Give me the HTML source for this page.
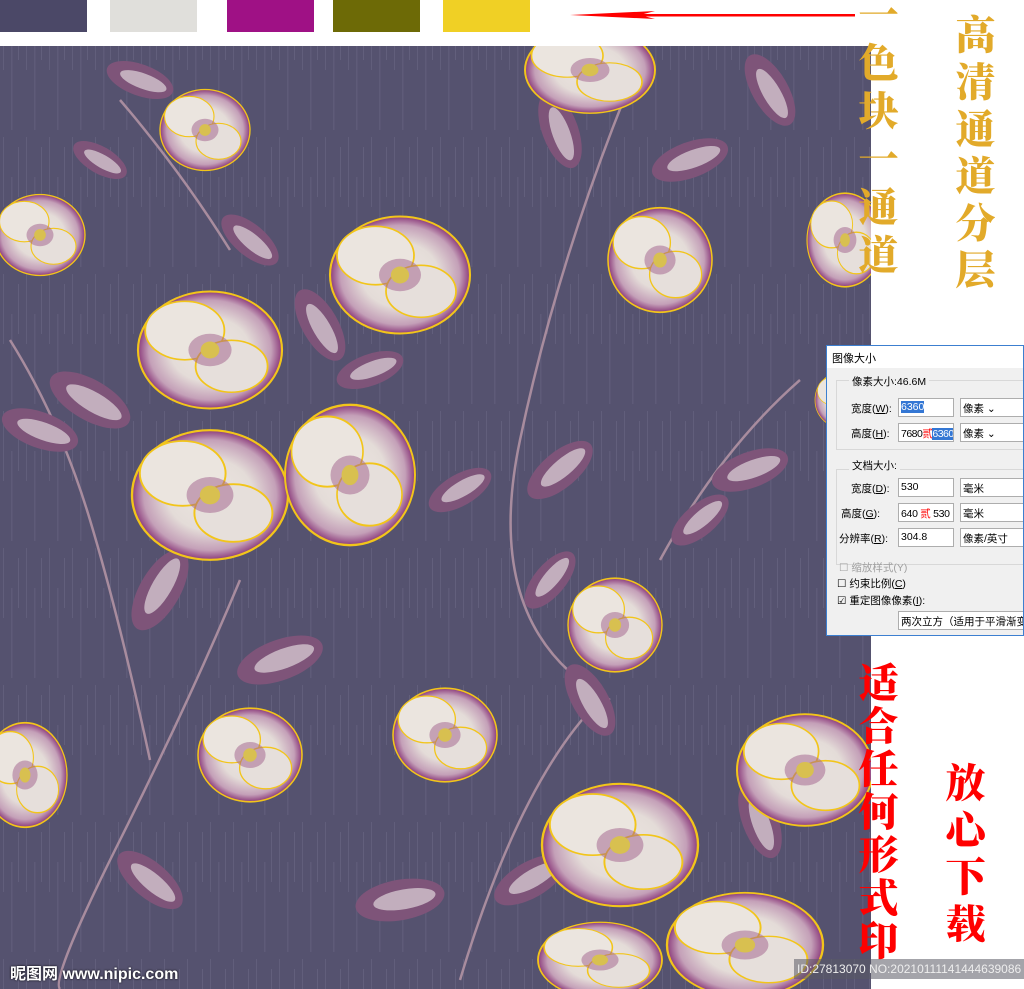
<!DOCTYPE html>
<html><head><meta charset="utf-8"><style>
*{margin:0;padding:0;box-sizing:border-box}
body{width:1024px;height:989px;overflow:hidden;background:#fff;position:relative;font-family:"Liberation Sans","Noto Sans CJK SC",sans-serif}
.sw{position:absolute;top:0;height:32px}
.pat{position:absolute;left:0;top:46px;width:871px;height:943px;background:#54516e;overflow:hidden}
.vt{position:absolute;font-family:"Noto Serif CJK SC","WenQuanYi Zen Hei",serif;font-weight:900;writing-mode:vertical-rl;text-orientation:upright}
.dlg{position:absolute;left:826px;top:345px;width:198px;height:291px;background:#f0f0f0;border:1px solid #3c7fd0;font-size:10.5px;color:#000;white-space:nowrap;overflow:hidden}
.dlg .t{height:22px;background:#fff;padding:4px 5px;font-size:11px}
.fs{position:absolute;border:1px solid #d8d8d8}
.lb{position:absolute;background:#f0f0f0;padding:0 3px}
.in{position:absolute;background:#fff;border:1px solid #adadad;height:19px;padding:2px 2px;overflow:hidden;white-space:nowrap}
.sel{background:#3477d4;color:#fff}
.r{position:absolute}
</style></head><body>
<div class="sw" style="left:0;width:87px;background:#4b4867"></div>
<div class="sw" style="left:110px;width:87px;background:#e0dfdb"></div>
<div class="sw" style="left:227px;width:87px;background:#9f1185"></div>
<div class="sw" style="left:333px;width:87px;background:#6d6a06"></div>
<div class="sw" style="left:443px;width:87px;background:#f0d025"></div>
<svg style="position:absolute;left:560px;top:5px" width="300" height="20"><path d="M10 10 L95 6 L80 10 L95 14 Z" fill="#f00"/><rect x="80" y="9" width="215" height="2.5" fill="#f00"/></svg>
<div class="pat">
<svg width="871" height="943" viewBox="0 46 871 943">
<defs>
<pattern id="st" width="23" height="137" patternUnits="userSpaceOnUse"><rect width="23" height="137" fill="#55526f"/><rect x="3" y="0" width="1" height="70" fill="#615e7b"/><rect x="11" y="40" width="1.5" height="90" fill="#5e5b78"/><rect x="18" y="10" width="1" height="50" fill="#625f7c"/></pattern>
<radialGradient id="fl"><stop offset="0" stop-color="#ece6e0"/><stop offset=".55" stop-color="#e4dcd8"/><stop offset=".85" stop-color="#c4a0b8"/><stop offset="1" stop-color="#8c3c7c"/></radialGradient>
<g id="F"><ellipse rx="1" ry=".9" fill="url(#fl)" stroke="#f2c51a" stroke-width=".03"/><ellipse cx="-.35" cy="-.3" rx=".55" ry=".45" fill="#ebe5df" stroke="#f2c51a" stroke-width=".025"/><ellipse cx=".3" cy=".25" rx=".5" ry=".4" fill="#e6dfdb" stroke="#f2c51a" stroke-width=".025"/><ellipse rx=".3" ry=".25" fill="#a0608c" opacity=".5"/><circle r=".13" fill="#d8c050"/></g>
<g id="L"><ellipse rx="1" ry=".45" fill="#7e5479"/><ellipse rx=".7" ry=".22" cx=".1" fill="#c2aebd"/></g>
</defs>
<rect x="0" y="46" width="871" height="943" fill="url(#st)"/>
<g stroke="#a88c9e" stroke-width="2.5" fill="none">
<path d="M10 340 Q60 420 90 520 T150 760"/><path d="M240 580 Q190 700 120 840 T60 989"/>
<path d="M640 60 Q560 250 520 440 T610 700"/><path d="M600 700 Q520 780 460 980"/>
<path d="M120 100 Q180 170 230 250"/><path d="M800 380 Q720 450 660 560"/>
</g>
<g>
<use href="#L" transform="translate(140 80) rotate(20) scale(35)"/>
<use href="#L" transform="translate(320 325) rotate(60) scale(40)"/>
<use href="#L" transform="translate(370 370) rotate(-20) scale(35)"/>
<use href="#L" transform="translate(90 400) rotate(30) scale(45)"/>
<use href="#L" transform="translate(160 590) rotate(-60) scale(45)"/>
<use href="#L" transform="translate(280 660) rotate(-20) scale(45)"/>
<use href="#L" transform="translate(560 130) rotate(70) scale(40)"/>
<use href="#L" transform="translate(690 160) rotate(-20) scale(40)"/>
<use href="#L" transform="translate(770 90) rotate(60) scale(40)"/>
<use href="#L" transform="translate(560 470) rotate(-40) scale(40)"/>
<use href="#L" transform="translate(460 490) rotate(-30) scale(35)"/>
<use href="#L" transform="translate(750 470) rotate(-20) scale(40)"/>
<use href="#L" transform="translate(590 700) rotate(60) scale(40)"/>
<use href="#L" transform="translate(40 430) rotate(20) scale(40)"/>
<use href="#L" transform="translate(400 900) rotate(-10) scale(45)"/>
<use href="#L" transform="translate(150 880) rotate(40) scale(40)"/>
<use href="#L" transform="translate(760 820) rotate(70) scale(40)"/>
<use href="#L" transform="translate(530 880) rotate(-30) scale(40)"/>
<use href="#L" transform="translate(550 580) rotate(-50) scale(35)"/>
<use href="#L" transform="translate(250 240) rotate(40) scale(35)"/>
<use href="#L" transform="translate(100 160) rotate(30) scale(30)"/>
<use href="#L" transform="translate(700 520) rotate(-40) scale(35)"/>
</g>
<g>
<use href="#F" transform="translate(205 130) scale(45)"/>
<use href="#F" transform="translate(40 235) scale(45)"/>
<use href="#F" transform="translate(400 275) scale(70 65)"/>
<use href="#F" transform="translate(210 350) scale(72 65)"/>
<use href="#F" transform="translate(210 495) scale(78 72)"/>
<use href="#F" transform="translate(350 475) scale(65 78)"/>
<use href="#F" transform="translate(660 260) scale(52 58)"/>
<use href="#F" transform="translate(590 70) scale(65 48)"/>
<use href="#F" transform="translate(845 240) scale(38 52)"/>
<use href="#F" transform="translate(615 625) scale(47 52)"/>
<use href="#F" transform="translate(445 735) scale(52)"/>
<use href="#F" transform="translate(250 755) scale(52)"/>
<use href="#F" transform="translate(805 770) scale(68 62)"/>
<use href="#F" transform="translate(25 775) scale(42 58)"/>
<use href="#F" transform="translate(620 845) scale(78 68)"/>
<use href="#F" transform="translate(745 945) scale(78 58)"/>
<use href="#F" transform="translate(600 960) scale(62 42)"/>
<use href="#F" transform="translate(840 400) scale(25 30)"/>
</g>
</svg>
</div>
<div class="vt" style="left:858px;top:-6px;font-size:40px;line-height:40px;letter-spacing:8px;color:#e2aa2a">一色块一通道</div>
<div class="vt" style="left:955px;top:14px;font-size:40px;line-height:40px;letter-spacing:7px;color:#e2aa2a">高清通道分层</div>
<div class="vt" style="left:858px;top:662px;font-size:40px;line-height:40px;letter-spacing:3px;color:#f00">适合任何形式印</div>
<div class="vt" style="left:945px;top:762px;font-size:40px;line-height:40px;letter-spacing:7px;color:#f00">放心下载</div>
<div class="dlg">
<div class="t">图像大小</div>
<div class="fs" style="left:9px;top:34px;width:190px;height:70px"></div>
<div class="lb" style="left:22px;top:28px">像素大小:46.6M</div>
<div class="r" style="left:24px;top:55px">宽度(<u>W</u>):</div><div class="in" style="left:71px;top:52px;width:56px"><span class="sel">6360</span></div><div class="in" style="left:133px;top:52px;width:66px">像素 ⌄</div>
<div class="r" style="left:24px;top:80px">高度(<u>H</u>):</div><div class="in" style="left:71px;top:77px;width:56px;letter-spacing:-.5px">7680<span style="color:red">贰</span><span class="sel">6360</span></div><div class="in" style="left:133px;top:77px;width:66px">像素 ⌄</div>
<div class="fs" style="left:9px;top:123px;width:190px;height:96px"></div>
<div class="lb" style="left:22px;top:112px">文档大小:</div>
<div class="r" style="left:24px;top:135px">宽度(<u>D</u>):</div><div class="in" style="left:71px;top:132px;width:56px">530</div><div class="in" style="left:133px;top:132px;width:66px">毫米</div>
<div class="r" style="left:14px;top:160px">高度(<u>G</u>):</div><div class="in" style="left:71px;top:157px;width:56px;letter-spacing:-.3px">640 <span style="color:red">贰</span> 530</div><div class="in" style="left:133px;top:157px;width:66px">毫米</div>
<div class="r" style="left:12px;top:185px">分辨率(<u>R</u>):</div><div class="in" style="left:71px;top:182px;width:56px">304.8</div><div class="in" style="left:133px;top:182px;width:66px">像素/英寸</div>
<div class="r" style="left:12px;top:214px;color:#a0a0a0">☐ 缩放样式(Y)</div>
<div class="r" style="left:10px;top:230px">☐ 约束比例(<u>C</u>)</div>
<div class="r" style="left:10px;top:247px">☑ 重定图像像素(<u>I</u>):</div>
<div class="in" style="left:71px;top:265px;width:128px">两次立方（适用于平滑渐变</div>
</div>
<div style="position:absolute;left:10px;top:960px;color:#fff;font-weight:bold;font-size:16px;text-shadow:0 0 2px #000">昵图网 www.nipic.com</div>
<div style="position:absolute;left:794px;top:959px;width:230px;height:20px;background:rgba(90,90,100,.55);color:#eee;font-size:12px;padding:3px 3px;white-space:nowrap;overflow:hidden">ID:27813070 NO:20210111141444639086</div>
</body></html>
